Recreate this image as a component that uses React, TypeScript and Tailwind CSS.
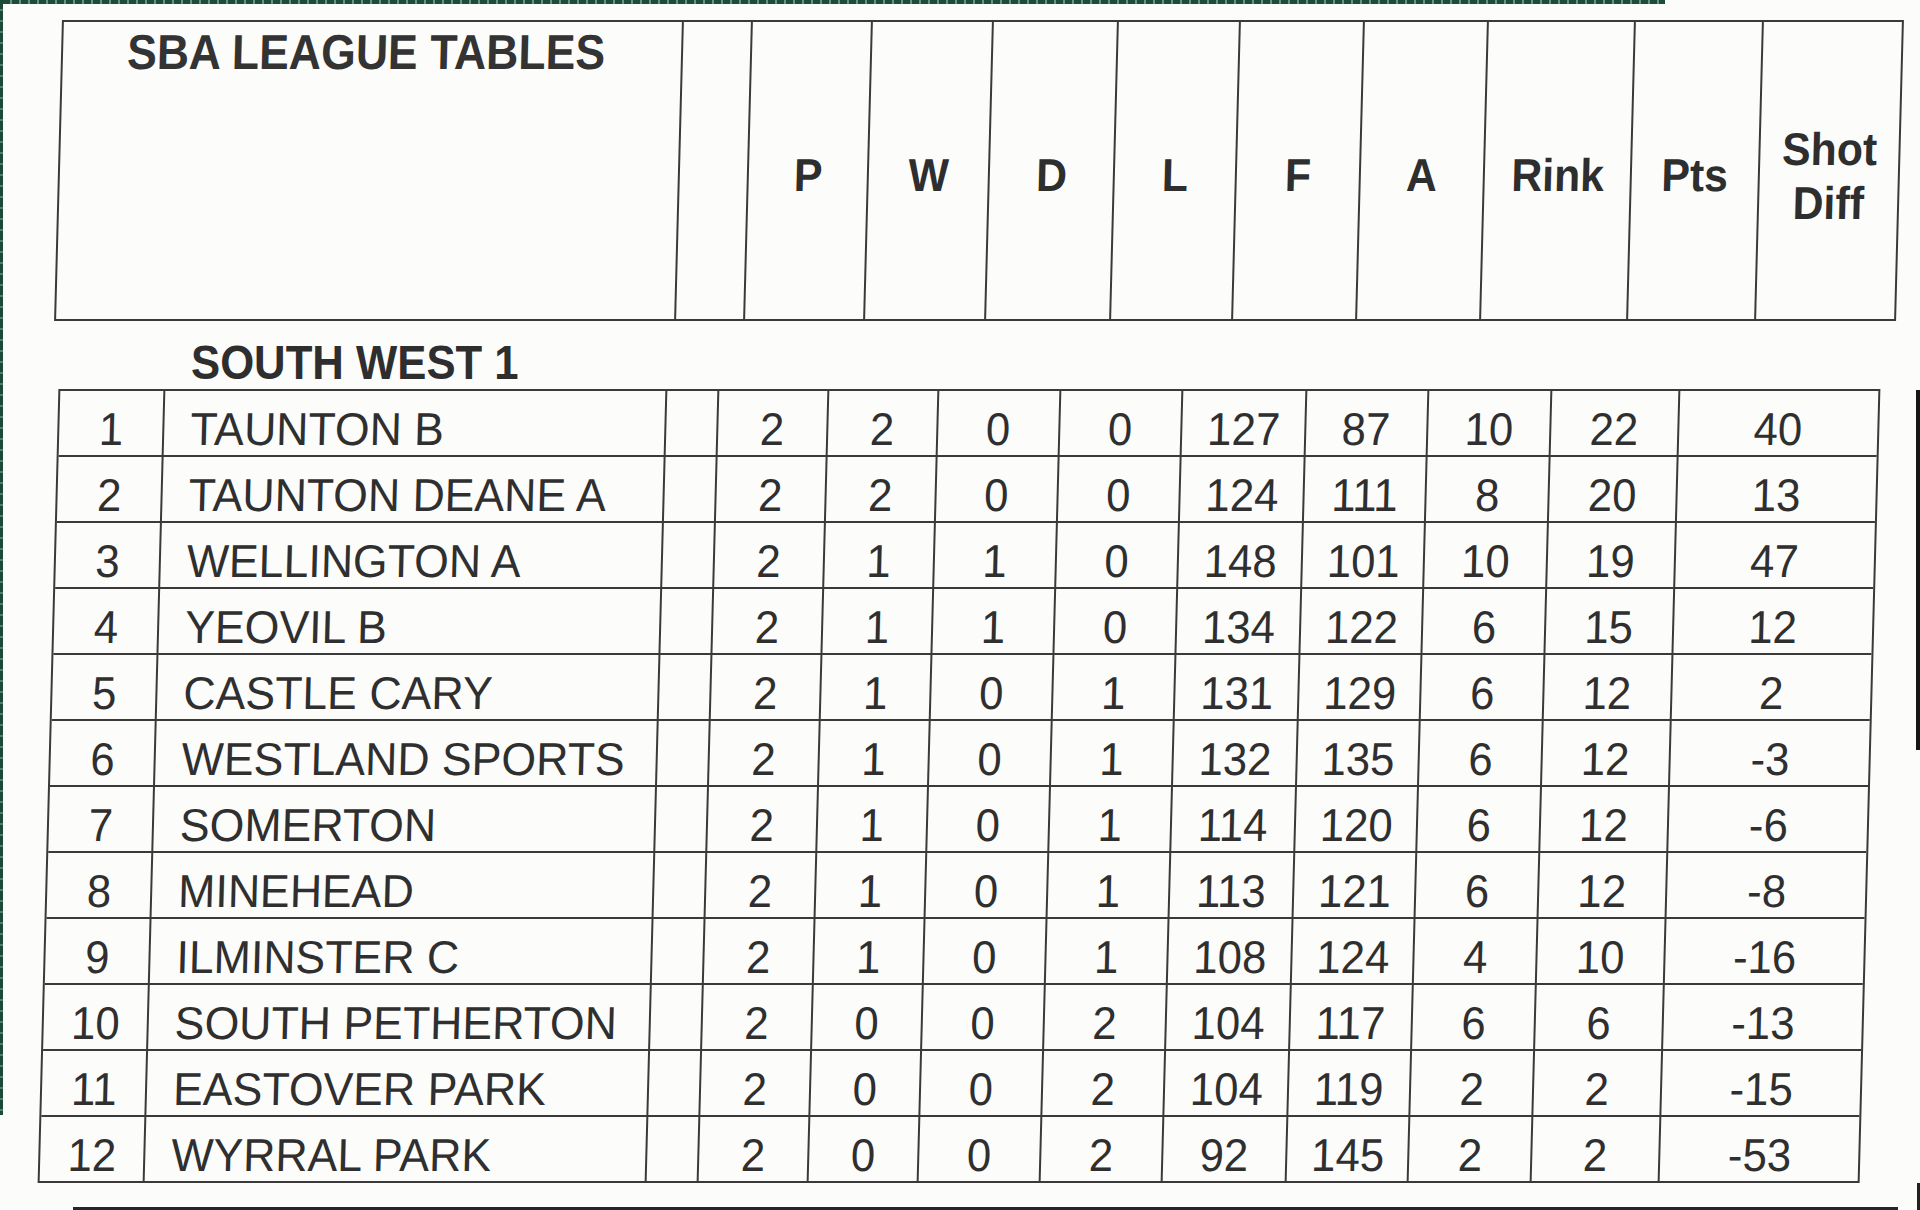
import React from "react"

type Row = [number, string, number, number, number, number, number, number, number, number, number]

const rows: Row[] = [
  [1, "TAUNTON B", 2, 2, 0, 0, 127, 87, 10, 22, 40],
  [2, "TAUNTON DEANE A", 2, 2, 0, 0, 124, 111, 8, 20, 13],
  [3, "WELLINGTON A", 2, 1, 1, 0, 148, 101, 10, 19, 47],
  [4, "YEOVIL B", 2, 1, 1, 0, 134, 122, 6, 15, 12],
  [5, "CASTLE CARY", 2, 1, 0, 1, 131, 129, 6, 12, 2],
  [6, "WESTLAND SPORTS", 2, 1, 0, 1, 132, 135, 6, 12, -3],
  [7, "SOMERTON", 2, 1, 0, 1, 114, 120, 6, 12, -6],
  [8, "MINEHEAD", 2, 1, 0, 1, 113, 121, 6, 12, -8],
  [9, "ILMINSTER C", 2, 1, 0, 1, 108, 124, 4, 10, -16],
  [10, "SOUTH PETHERTON", 2, 0, 0, 2, 104, 117, 6, 6, -13],
  [11, "EASTOVER PARK", 2, 0, 0, 2, 104, 119, 2, 2, -15],
  [12, "WYRRAL PARK", 2, 0, 0, 2, 92, 145, 2, 2, -53],
]

const headerCols = ["P", "W", "D", "L", "F", "A", "Rink", "Pts"]

// the print uses a slightly narrow face, so text is squeezed a little
const HeaderBox = () => (
  <div className="ml-[55px] mt-[16px] h-[301px] w-[1842px] skew-x-[-1.5deg] border-2 border-[#3a3a3a]">
    <div className="grid h-full grid-cols-[620px_69px_120px_121px_125px_122px_124px_124px_147px_128px_138px]">
      <div className="border-r-2 border-[#3a3a3a] pl-[64px] pt-[6px]">
        <span className="inline-block origin-left scale-x-[0.91] whitespace-nowrap text-[49px] font-bold leading-[49px] text-[#333]">
          SBA LEAGUE TABLES
        </span>
      </div>
      <div className="border-r-2 border-[#3a3a3a]" />
      {headerCols.map((c) => (
        <div key={c} className="flex items-center justify-center border-r-2 border-[#3a3a3a] pt-[10px] text-[46px] font-bold text-[#2e2e2e]">
          <span className="inline-block scale-x-[0.93]">{c}</span>
        </div>
      ))}
      <div className="flex items-center justify-center pt-[10px] text-center text-[46px] font-bold leading-[54px] text-[#2e2e2e]">
        <div className="scale-x-[0.93]">
          Shot
          <br />
          Diff
        </div>
      </div>
    </div>
  </div>
)

const cols = "grid grid-cols-[105px_502px_52px_110px_110px_122px_122px_124px_122px_123px_128px_198px]"

const DataTable = () => (
  <div className="ml-[45px] mt-[2px] w-[1822px] skew-x-[-1.5deg] border-2 border-[#3a3a3a] text-[46px] text-[#2f2f2f]">
    {rows.map((r, i) => {
      const [pos, name, ...nums] = r
      const last = i === rows.length - 1
      return (
        <div key={pos} className={last ? `${cols} h-[64px]` : `${cols} h-[66px] border-b-2 border-[#3a3a3a]`}>
          <div className="flex items-center justify-center border-r-2 border-[#3a3a3a] pt-[12px] leading-none">
            <span className="inline-block scale-x-[0.95]">{pos}</span>
          </div>
          <div className="flex items-center border-r-2 border-[#3a3a3a] pl-[26px] pt-[12px] leading-none">
            <span className="inline-block origin-left scale-x-[0.97] whitespace-nowrap">{name}</span>
          </div>
          <div className="border-r-2 border-[#3a3a3a]" />
          {nums.map((n, j) => (
            <div
              key={j}
              className={
                j === nums.length - 1
                  ? "flex items-center justify-center pt-[12px] leading-none"
                  : "flex items-center justify-center border-r-2 border-[#3a3a3a] pt-[12px] leading-none"
              }
            >
              <span className="inline-block scale-x-[0.95]">{n}</span>
            </div>
          ))}
        </div>
      )
    })}
  </div>
)

export default function App() {
  return (
    <div className="flex h-[1210px] w-[1920px] overflow-hidden bg-[#fcfcfb] font-['Liberation_Sans',Arial,sans-serif]">
      {/* left edge of the photo */}
      <div className="w-[3px] shrink-0">
        <div className="h-[1115px] w-[3px] bg-[repeating-linear-gradient(180deg,#1b4a3a_0px,#1b4a3a_9px,#4f7e6c_9px,#4f7e6c_11px)]" />
      </div>

      <div className="flex w-[1911px] flex-col">
        <div className="h-[4px] w-[1662px] bg-[repeating-linear-gradient(90deg,#1d4c3b_0px,#1d4c3b_7px,#6a9484_7px,#6a9484_9px)]" />
        <HeaderBox />
        <div className="mt-[18px] pl-[188px]">
          <span className="inline-block origin-left scale-x-[0.91] whitespace-nowrap text-[48px] font-bold leading-[48px] text-[#2e2e2e]">
            SOUTH WEST 1
          </span>
        </div>
        <DataTable />
        <div className="flex-1" />
        <div className="ml-[70px] h-[3px] w-[1825px] bg-[#262626]" />
      </div>

      {/* right edge of the photo */}
      <div className="flex w-[6px] shrink-0 flex-col items-end">
        <div className="h-[390px]" />
        <div className="h-[360px] w-[4px] bg-[#161616]" />
        <div className="flex-1" />
        <div className="h-[27px] w-[3px] bg-[#222]" />
      </div>
    </div>
  )
}
